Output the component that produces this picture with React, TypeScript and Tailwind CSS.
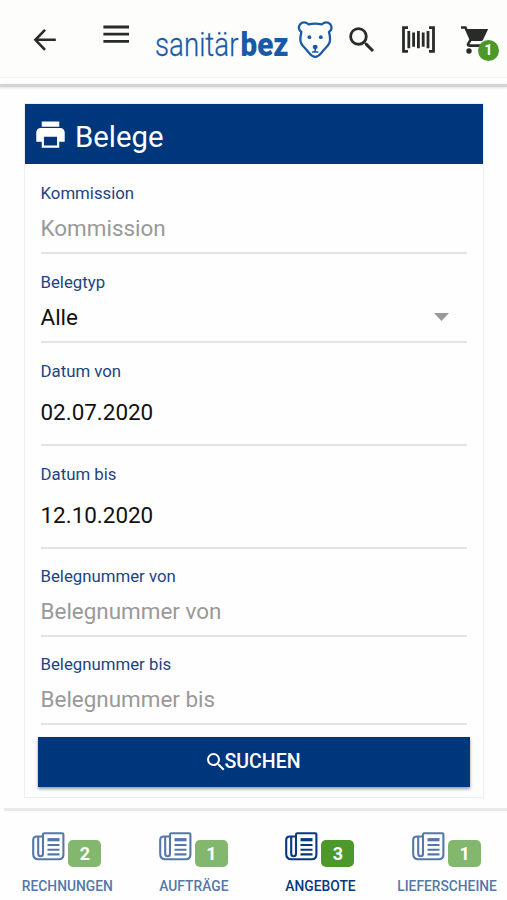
import clsx from "clsx";
import { IoMdPrint } from "react-icons/io";
import { MdSearch } from "react-icons/md";

const BearLogo = () => (
  <svg width="36" height="38" viewBox="0 0 36 38" fill="none" stroke="#195aa6" strokeLinecap="round" strokeLinejoin="round">
    <path
      strokeWidth="2.3"
      d="M11.5 3.4C9.5 .9 5.2 .8 3.2 3.2C1 5.9 1.7 9.2 4.4 11C3.5 14.5 2.8 18.5 3.9 21.6C5.2 25.2 8.8 27.6 11.5 31.2C13.4 33.6 14.8 35.9 18.2 35.9S23 33.6 24.9 31.2C27.6 27.6 31.2 25.2 32.5 21.6C33.6 18.5 32.9 14.5 32 11C34.7 9.2 35.4 5.9 33.2 3.2C31.2 .8 26.9 .9 24.9 3.4C21 2.5 15.4 2.5 11.5 3.4Z"
    />
    <circle cx="12.4" cy="16.2" r="1.9" fill="#195aa6" stroke="none" />
    <circle cx="23.8" cy="16.2" r="1.9" fill="#195aa6" stroke="none" />
    <ellipse cx="18.2" cy="26" rx="2.5" ry="2.2" fill="#195aa6" stroke="none" />
    <path d="M18.2 27v4M15.6 31h5.2" strokeWidth="1.6" />
  </svg>
);

const CartIcon = () => (
  <svg width="28" height="28" viewBox="0 0 28 28" fill="none" stroke="currentColor" strokeWidth="2.6">
    <path d="M0 1.5H4.4L9.8 13.5L7 18.2Q6.6 19.6 8.2 19.6H23" />
    <path d="M5 3H27.2L21.8 14.2Q21.4 15 20.4 15H9.8Z" fill="currentColor" stroke="none" />
    <circle cx="8" cy="25" r="2.7" fill="currentColor" stroke="none" />
    <circle cx="21.5" cy="25" r="2.7" fill="currentColor" stroke="none" />
  </svg>
);

const Header = () => (
  <header className="h-[88px] bg-[#fdfefc]">
    <div className="flex h-[78px] items-start border-b border-[#f3f3f3] text-[#292b29]">
      <svg className="mt-[28px] ml-[33px] shrink-0" width="24" height="24" viewBox="0 0 24 24" fill="none" stroke="currentColor" strokeWidth="2.6">
        <path d="M22.8 11.8H2.5M12 1.8L2.4 11.8L12 21.8" />
      </svg>
      <svg className="mt-[25px] ml-[46px] shrink-0" width="27" height="19" viewBox="0 0 27 19" fill="currentColor">
        <path d="M.4 .6h25.6v2.8H.4zM.4 7.8h25.6v2.8H.4zM.4 15h25.6v2.8H.4z" />
      </svg>
      <svg className="mt-[24px] ml-[25px] shrink-0 overflow-visible" width="134" height="40" viewBox="0 0 134 40" fill="#195aa6">
        <text y="31.5" fontFamily="Roboto, sans-serif" fontSize="33.5" fontWeight="300" stroke="#195aa6" strokeWidth=".3" textLength="83.5" lengthAdjust="spacingAndGlyphs">
          sanitär
        </text>
        <text x="85.5" y="31.5" fontFamily="Roboto, sans-serif" fontSize="33.5" fontWeight="900" textLength="48" lengthAdjust="spacingAndGlyphs">
          bez
        </text>
      </svg>
      <div className="mt-[21px] ml-[8px] shrink-0">
        <BearLogo />
      </div>
      <MdSearch className="mt-[23px] ml-[12px] shrink-0" size={34} />
      <svg className="mt-[26px] ml-[23px] shrink-0" width="33" height="28" viewBox="0 0 33 28" fill="none" stroke="currentColor">
        <path d="M6 1.6H1.5v23.8H6M27 1.6h4.5v23.8H27" strokeWidth="2.8" />
        <path d="M6.8 5v17.2M11.6 6.4v14.4M16.4 5v17.2M21.2 6.4v14.4M26 5v17.2" strokeWidth="2.8" />
      </svg>
      <div className="relative mt-[26px] ml-[26px] shrink-0">
        <CartIcon />
        <span className="absolute top-[14px] left-[17px] flex size-[21px] items-center justify-center rounded-full bg-[#4b9828] text-[14.5px] font-bold text-white">
          1
        </span>
      </div>
    </div>
    <div className="h-[6px]" />
    <div className="h-[3px] bg-[#d4d4d4] shadow-[0_1px_3px_#dddddd]" />
  </header>
);

type FieldProps = {
  label: string;
  value: string;
  placeholder?: boolean;
  date?: boolean;
  select?: boolean;
  className: string;
};

const Field = ({ label, value, placeholder, date, select, className }: FieldProps) => (
  <div className={clsx("flex flex-col justify-end border-b-2 border-[#e4e4e4]", className)}>
    <div className="text-[16.8px] leading-[20px] text-[#1c4482]">{label}</div>
    <div
      className={clsx(
        "flex items-center justify-between text-[22.45px] leading-[28px]",
        date ? "mt-[17px] mb-[18px]" : "mt-[11px] mb-[10px]",
        placeholder ? "text-[#999999]" : "text-[#111111]",
      )}
    >
      {value}
      {select && (
        <svg className="mr-[18px]" width="15" height="8" viewBox="0 0 15 8">
          <path d="M0 0h15L7.5 8z" fill="#999999" />
        </svg>
      )}
    </div>
  </div>
);

const NewsIcon = () => (
  <svg width="33" height="29" viewBox="0 0 33 29" fill="none" stroke="currentColor" strokeWidth="2.1" strokeLinejoin="round">
    <path d="M11 4.5V2.5Q11 1.2 12.3 1.2H30.2Q31.4 1.2 31.4 2.5V22.5Q31.4 27.2 26.8 27.2H6.5Q1.2 27.2 1.2 22V8Q1.2 4.5 5 4.5H11V21.5Q11 24.3 8.6 24.3T6.2 21.5V5" />
    <path d="M15.5 7.7h12" strokeWidth="3.2" />
    <path d="M15.5 13h12M15.5 17.8h12M15.5 22.4h12" />
  </svg>
);

const tabs = [
  { label: "RECHNUNGEN", count: 2 },
  { label: "AUFTRÄGE", count: 1 },
  { label: "ANGEBOTE", count: 3, active: true },
  { label: "LIEFERSCHEINE", count: 1 },
];

const TabBar = () => (
  <nav className="mt-[10px] ml-1 flex h-[92px] border-t-3 border-[#e9e9e9]">
    {tabs.map((tab) => (
      <div
        key={tab.label}
        className={clsx("flex w-[126.6px] shrink-0 flex-col items-center pt-[21px]", tab.active ? "text-[#08387d]" : "text-[#5577aa]")}
      >
        <div className="flex h-[38px] items-start gap-[3px] pr-px">
          <NewsIcon />
          <span
            className={clsx(
              "mt-[8px] flex h-[27px] w-[33px] items-center justify-center rounded-[5px] text-[18px] font-bold text-white",
              tab.active ? "bg-[#4c982b]" : "bg-[#83b76e]",
            )}
          >
            {tab.count}
          </span>
        </div>
        <span className="mt-[6px] text-[13.8px] leading-[20px] font-medium whitespace-nowrap">{tab.label}</span>
      </div>
    ))}
  </nav>
);

const App = () => (
  <div className="h-[900px] w-[507px] overflow-hidden bg-[#fefefe] font-[Roboto,sans-serif]">
    <Header />
    <main className="mt-[15px] ml-[24px] h-[695px] w-[460px] border border-[#eeeeee]">
      <div className="flex h-[60px] items-center bg-[#00367c] pl-[8px] text-white">
        <IoMdPrint size={35} />
        <h1 className="mt-[6px] ml-[7px] text-[29.3px] leading-[36px]">Belege</h1>
      </div>
      <div className="mr-[16px] ml-[15.5px]">
        <Field className="h-[90px]" label="Kommission" value="Kommission" placeholder />
        <Field className="h-[89px]" label="Belegtyp" value="Alle" select />
        <Field className="h-[103px]" label="Datum von" value="02.07.2020" date />
        <Field className="h-[103px]" label="Datum bis" value="12.10.2020" date />
        <Field className="h-[88px]" label="Belegnummer von" value="Belegnummer von" placeholder />
        <Field className="h-[88px]" label="Belegnummer bis" value="Belegnummer bis" placeholder />
      </div>
      <button className="mt-[12px] ml-[13px] flex h-[50px] w-[432px] items-center justify-center bg-[#00367c] pr-[4px] text-[19.5px] font-medium text-white shadow-[0_2px_3px_#999999]">
        <MdSearch size={24} className="-mr-[3px]" />
        SUCHEN
      </button>
    </main>
    <TabBar />
  </div>
);

export default App;
